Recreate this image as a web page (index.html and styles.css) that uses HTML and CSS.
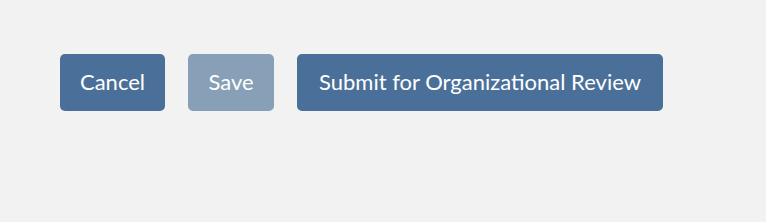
FILE: index.html
```html
<!DOCTYPE html>
<html lang="en">
<head>
  <meta charset="UTF-8" />
  <title>Review Actions</title>
  <link rel="stylesheet" href="styles.css">
</head>
<body>
  <div class="actions">
    <button class="btn btn-cancel" type="button">Cancel</button>
    <button class="btn btn-save" type="button" disabled>Save</button>
    <button class="btn btn-submit" type="button">Submit for Organizational Review</button>
  </div>
</body>
</html>
```

FILE: styles.css
```css
body {
  margin: 0;
  background: #f2f2f2;
  font-family: Lato, "Open Sans", sans-serif;
}

.actions {
  display: flex;
  gap: 23px;
  padding: 54px 60px;
}

.btn {
  height: 57px;
  padding: 0 0 3px;
  border: none;
  border-radius: 5px;
  background: #4a7099;
  color: #fff;
  font-family: inherit;
  font-size: 22px;
  cursor: pointer;
}

.btn-cancel {
  width: 105px;
}

.btn-save {
  width: 86px;
  background: #87a0b8;
  cursor: default;
}

.btn-submit {
  width: 366px;
}
```
